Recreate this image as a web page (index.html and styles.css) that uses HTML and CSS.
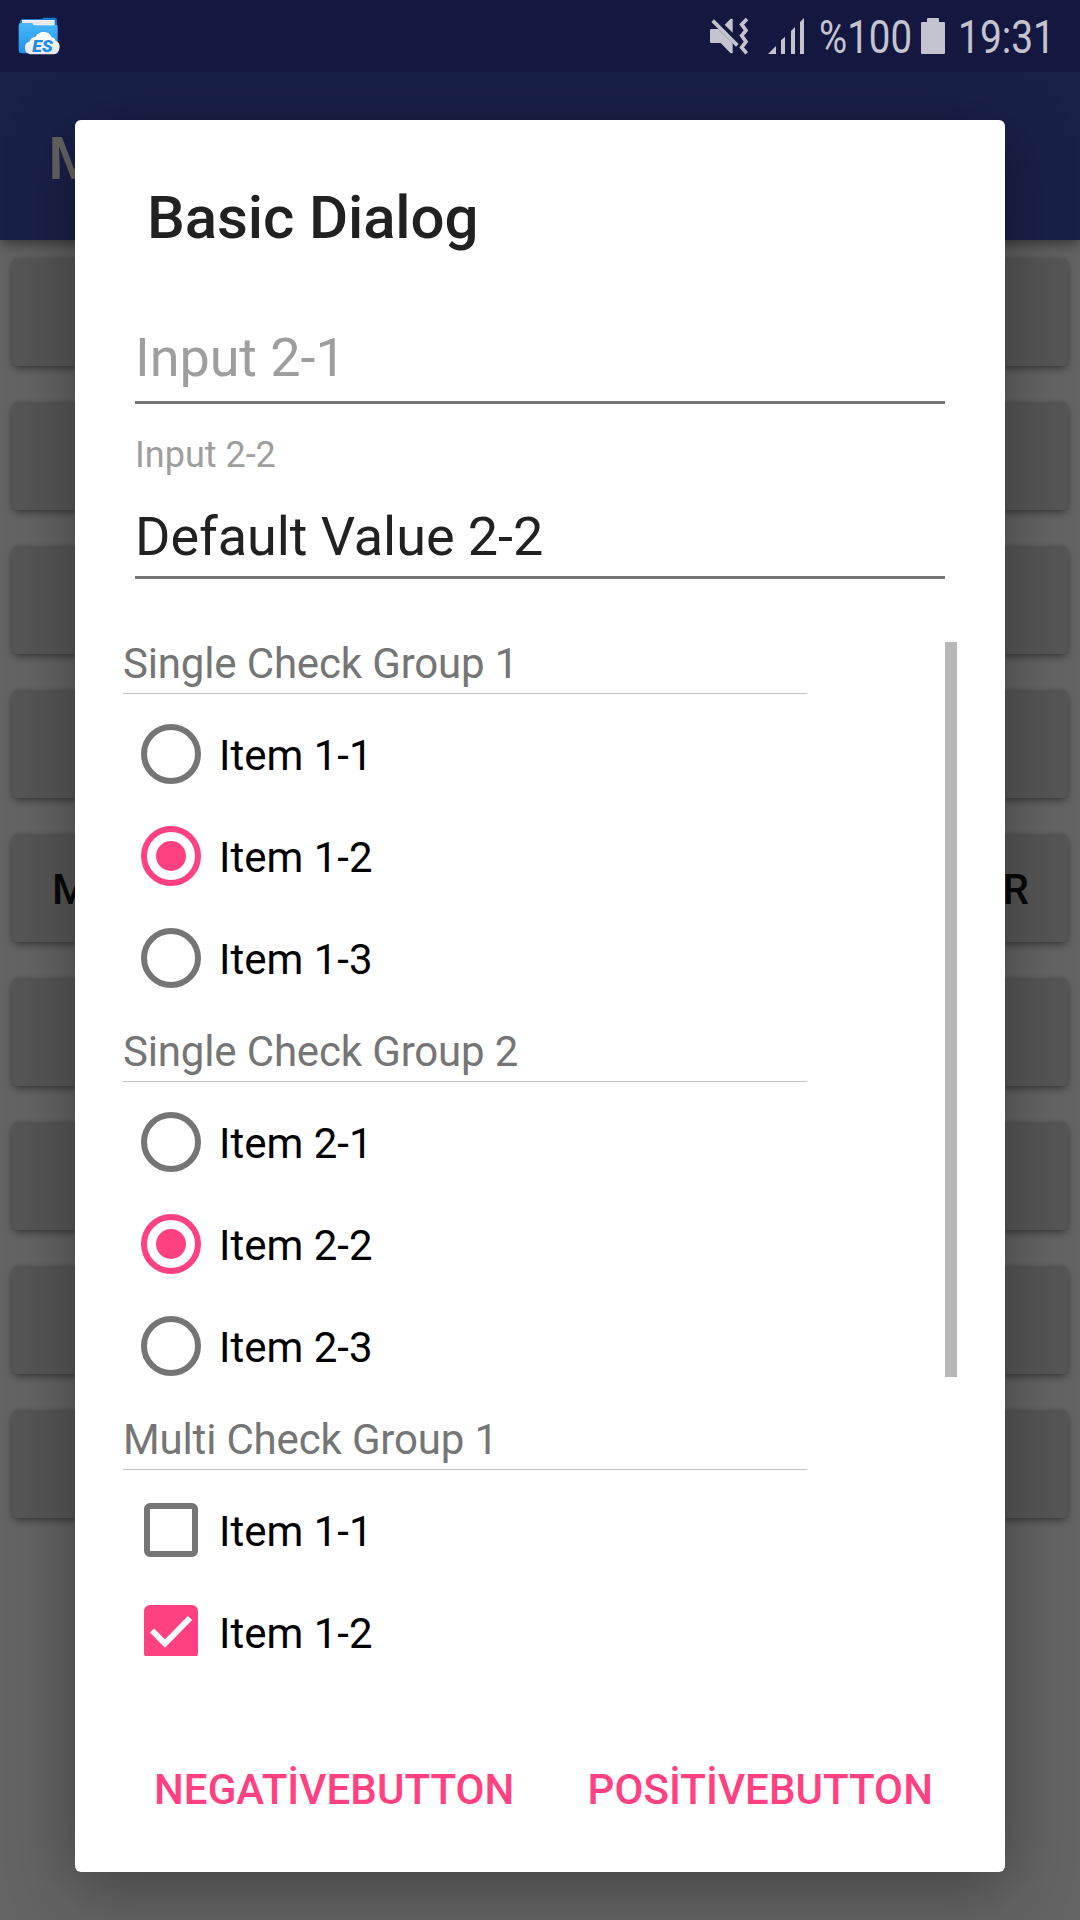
FILE: index.html
```html
<!DOCTYPE html>
<html lang="tr">
<head>
<meta charset="utf-8">
<title>Basic Dialog</title>
<link rel="stylesheet" href="styles.css">
</head>
<body>
<div class="screen">
  <header class="status">
    <svg class="app-icon" viewBox="54 51 126 114" aria-hidden="true">
      <defs>
        <linearGradient id="folder" x1="0" y1="0" x2="0" y2="1"><stop offset="0" stop-color="#4ab8fb"/><stop offset="1" stop-color="#2391e6"/></linearGradient>
        <linearGradient id="cloud" x1="0" y1="0" x2="0" y2="1"><stop offset="0" stop-color="#fff"/><stop offset="1" stop-color="#e6e6e6"/></linearGradient>
      </defs>
      <path fill="#1778cf" d="M60 62q2-5 8-5h58l4-4h34q7 0 7 7v60H60z"/>
      <path fill="#f4f4f4" d="M66 60h98v20H66z"/>
      <path stroke="#c9ced4" stroke-width="1.5" d="M67 66h97M67 71h97"/>
      <path fill="url(#folder)" d="M56 76q0-7 7-7h32q3 0 4 3l2 4h72v84H66q-10 0-10-10z"/>
      <path fill="url(#cloud)" d="M91 163q-15-2-16-18-1-17 15-21 2-13 17-14 7-14 23-14 19 0 25 16 9 1 12 11 12 4 12 17-1 21-19 23z"/>
      <text class="app-icon-text" x="97" y="156" textLength="61" lengthAdjust="spacingAndGlyphs">ES</text>
    </svg>
    <div class="indicators">
      <svg class="mute" viewBox="57 51 120 114" aria-hidden="true">
        <path d="M64 87h21l43 43v30h-6L92 129H64q-4 0-4-4V91q0-4 4-4zM104 74l18-18h6v42z"/>
        <path class="line" d="M68 62l74 74"/>
        <path class="line" d="M171 57L155 73L168 91L155 107L168 125L155 142L170 160"/>
      </svg>
      <svg class="signal" viewBox="234 54 108 108" aria-hidden="true"><path d="M234 162l24-24v24zM273 162v-41l12-11v52zM303 162V93l12-12v81zM330 162V66l12-12v108z"/></svg>
      <svg class="percent" viewBox="0 0 92 54"><text x="0" y="44" textLength="93" lengthAdjust="spacingAndGlyphs">%100</text></svg>
      <svg class="battery" viewBox="0 0 24 36" aria-hidden="true"><path d="M7 0h10q1 0 1 1v3h5q1 0 1 1v30q0 1-1 1H1q-1 0-1-1V5q0-1 1-1h5V1q0-1 1-1z"/></svg>
      <svg class="clock" viewBox="0 0 96 54"><text x="0" y="44" textLength="97" lengthAdjust="spacingAndGlyphs">19:31</text></svg>
    </div>
  </header>
  <div class="appbar">M</div>
  <main class="buttons">
    <div class="button"></div>
    <div class="button"></div>
    <div class="button"></div>
    <div class="button"></div>
    <div class="button"><span>M</span><span>R</span></div>
    <div class="button"></div>
    <div class="button"></div>
    <div class="button"></div>
    <div class="button"></div>
  </main>

  <section class="dialog" role="dialog">
    <h1 class="title">Basic Dialog</h1>
    <div class="field field-empty">Input 2-1</div>
    <div class="field-label">Input 2-2</div>
    <div class="field">Default Value 2-2</div>
    <div class="scroll">
      <div class="groups">
        <div class="group">
          <h2 class="group-title">Single Check Group 1</h2>
          <div class="item"><i class="radio"></i><span>Item 1-1</span></div>
          <div class="item"><i class="radio on"></i><span>Item 1-2</span></div>
          <div class="item"><i class="radio"></i><span>Item 1-3</span></div>
        </div>
        <div class="group">
          <h2 class="group-title">Single Check Group 2</h2>
          <div class="item"><i class="radio"></i><span>Item 2-1</span></div>
          <div class="item"><i class="radio on"></i><span>Item 2-2</span></div>
          <div class="item"><i class="radio"></i><span>Item 2-3</span></div>
        </div>
        <div class="group">
          <h2 class="group-title">Multi Check Group 1</h2>
          <div class="item"><i class="check"></i><span>Item 1-1</span></div>
          <div class="item"><i class="check on"><svg viewBox="0 0 54 54"><path d="M8 25.5l13 13L46 13"/></svg></i><span>Item 1-2</span></div>
        </div>
      </div>
      <div class="thumb"></div>
    </div>
    <footer class="actions">
      <span class="negative">NEGATİVEBUTTON</span>
      <span>POSİTİVEBUTTON</span>
    </footer>
  </section>
</div>
</body>
</html>
```
FILE: styles.css
```css
* { box-sizing: border-box; }
body { margin: 0; font-family: Roboto, "Noto Sans", sans-serif; }
h1, h2 { margin: 0; font-weight: 400; }
svg { display: block; overflow: visible; }

.screen {
  position: relative;
  width: 1080px;
  height: 1920px;
  overflow: hidden;
  background: #646464;
}

.status {
  position: relative;
  z-index: 1;
  display: flex;
  justify-content: space-between;
  height: 72px;
  padding: 0 26px 0 18px;
  background: #141840;
}
.app-icon { width: 42px; height: 38px; margin-top: 17px; }
.app-icon-text { font: italic 900 47px Roboto, sans-serif; fill: #1b8bea; }
.indicators { display: flex; fill: #c4c4cf; }
.indicators text { font: 400 46px Roboto, sans-serif; }
.mute { width: 40px; height: 38px; margin: 17px 19px 0 0; }
.mute .line { fill: none; stroke: #c4c4cf; stroke-width: 11; }
.signal { width: 36px; height: 36px; margin: 18px 15px 0 0; }
.percent { width: 92px; height: 54px; margin: 9px 10px 0 0; }
.battery { width: 24px; height: 36px; margin: 18px 13px 0 0; }
.clock { width: 96px; height: 54px; margin-top: 9px; }

.appbar {
  position: relative;
  height: 168px;
  padding-left: 48px;
  background: #192047;
  box-shadow: 0 3px 14px rgba(0, 0, 0, .5);
  color: #646464;
  font-size: 60px;
  font-weight: 500;
  line-height: 174px;
}

.buttons { display: grid; gap: 36px; padding: 18px 12px; }
.button {
  display: flex;
  justify-content: space-between;
  height: 108px;
  padding: 0 39px 0 40px;
  border-radius: 6px;
  background: #565656;
  box-shadow: 0 3px 7px rgba(0, 0, 0, .38);
  color: #090909;
  font-size: 42px;
  font-weight: 500;
  line-height: 112px;
}

.dialog {
  position: absolute;
  left: 75px;
  top: 120px;
  display: flex;
  flex-direction: column;
  width: 930px;
  height: 1752px;
  padding: 0 60px;
  border-radius: 6px;
  background: #fff;
  box-shadow: 0 14px 66px rgba(0, 0, 0, .36);
}
.title {
  height: 137px;
  padding: 63px 0 0 12px;
  color: #212121;
  font-size: 60px;
  font-weight: 500;
  line-height: 70px;
  letter-spacing: -.12px;
}
.field {
  height: 95px;
  border-bottom: 3px solid #757575;
  color: #212121;
  font-size: 54px;
  line-height: 64px;
  padding-top: 21px;
  letter-spacing: -.06px;
}
.field-empty { height: 147px; padding-top: 69px; color: #9e9e9e; }
.field-label {
  height: 80px;
  padding-top: 30px;
  color: #9e9e9e;
  font-size: 36px;
  line-height: 42px;
}
.scroll {
  display: flex;
  justify-content: space-between;
  height: 1017px;
  margin: 60px -12px 0;
  overflow: hidden;
}
.groups { width: 684px; }
.group { margin-bottom: 18px; }
.group-title {
  height: 55px;
  margin-bottom: 9px;
  border-bottom: 1px solid #c2c2c2;
  color: #757575;
  font-size: 42px;
  line-height: 49px;
  letter-spacing: -.16px;
}
.item {
  display: flex;
  align-items: center;
  gap: 18px;
  height: 102px;
  padding-left: 18px;
  font-size: 42px;
  color: #000;
}
.item span { padding-top: 3px; line-height: 49px; }
.radio {
  display: grid;
  place-items: center;
  width: 60px;
  height: 60px;
  border: 6px solid #757575;
  border-radius: 50%;
}
.radio.on { border-color: #ff4081; }
.radio.on::before {
  content: "";
  width: 30px;
  height: 30px;
  border-radius: 50%;
  background: #ff4081;
}
.check {
  width: 54px;
  height: 54px;
  margin: 0 3px;
  border: 6px solid #757575;
  border-radius: 6px;
}
.check.on { border: 0; background: #ff4081; }
.check path { fill: none; stroke: #fff; stroke-width: 6; }
.thumb { width: 12px; height: 735px; margin-top: 3px; background: #b8b8b8; }
.actions {
  display: flex;
  justify-content: space-between;
  margin-top: 109px;
  padding: 0 12px 0 19px;
  color: #ff4081;
  font-size: 42px;
  font-weight: 500;
  line-height: 50px;
  letter-spacing: .07px;
}
```
